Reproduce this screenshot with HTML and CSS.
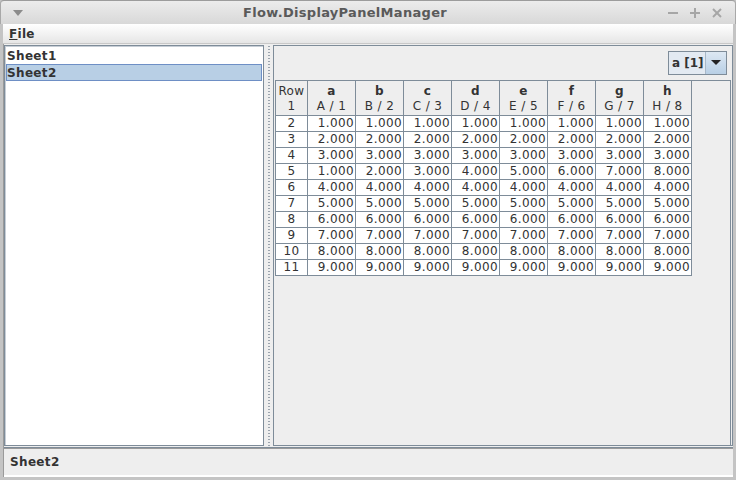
FILE: index.html
```html
<!DOCTYPE html>
<html>
<head>
<meta charset="utf-8">
<link rel="stylesheet" href="styles.css">
</head>
<body>
<div class="window">
  <div class="titlebar">
    <svg class="menu-arrow" width="10" height="6" viewBox="0 0 10 6"><polygon points="0,0 10,0 5,6" fill="#8c8c8c"/></svg>
    <div class="title">Flow.DisplayPanelManager</div>
    <div class="controls">
      <svg width="12" height="12" viewBox="0 0 12 12"><line x1="1" y1="6" x2="11" y2="6" stroke="#a6a6a6" stroke-width="2"/></svg>
      <svg width="12" height="12" viewBox="0 0 12 12"><line x1="1" y1="6" x2="11" y2="6" stroke="#a6a6a6" stroke-width="2"/><line x1="6" y1="1" x2="6" y2="11" stroke="#a6a6a6" stroke-width="2"/></svg>
      <svg width="12" height="12" viewBox="0 0 12 12"><line x1="2" y1="2" x2="10" y2="10" stroke="#a6a6a6" stroke-width="2"/><line x1="10" y1="2" x2="2" y2="10" stroke="#a6a6a6" stroke-width="2"/></svg>
    </div>
  </div>
  <div class="menubar"><span class="menu"><u>F</u>ile</span></div>
  <div class="main">
    <div class="list">
      <div class="item">Sheet1</div>
      <div class="item selected">Sheet2</div>
    </div>
    <div class="divider"><div class="dots"></div></div>
    <div class="right">
      <div class="toolbar">
        <div class="combo"><span class="combo-text">a [1]</span><span class="combo-btn"><svg width="10" height="6" viewBox="0 0 10 6"><polygon points="0,0 10,0 5,5" fill="#222"/></svg></span></div>
      </div>
      <div class="scroll">
        <table class="grid">
          <thead>
            <tr>
              <th class="rowcol">Row<br>1</th>
              <th><b>a</b><br>A / 1</th>
              <th><b>b</b><br>B / 2</th>
              <th><b>c</b><br>C / 3</th>
              <th><b>d</b><br>D / 4</th>
              <th><b>e</b><br>E / 5</th>
              <th><b>f</b><br>F / 6</th>
              <th><b>g</b><br>G / 7</th>
              <th><b>h</b><br>H / 8</th>
            </tr>
          </thead>
          <tbody>
            <tr><td class="rn">2</td><td>1.000</td><td>1.000</td><td>1.000</td><td>1.000</td><td>1.000</td><td>1.000</td><td>1.000</td><td>1.000</td></tr>
            <tr><td class="rn">3</td><td>2.000</td><td>2.000</td><td>2.000</td><td>2.000</td><td>2.000</td><td>2.000</td><td>2.000</td><td>2.000</td></tr>
            <tr><td class="rn">4</td><td>3.000</td><td>3.000</td><td>3.000</td><td>3.000</td><td>3.000</td><td>3.000</td><td>3.000</td><td>3.000</td></tr>
            <tr><td class="rn">5</td><td>1.000</td><td>2.000</td><td>3.000</td><td>4.000</td><td>5.000</td><td>6.000</td><td>7.000</td><td>8.000</td></tr>
            <tr><td class="rn">6</td><td>4.000</td><td>4.000</td><td>4.000</td><td>4.000</td><td>4.000</td><td>4.000</td><td>4.000</td><td>4.000</td></tr>
            <tr><td class="rn">7</td><td>5.000</td><td>5.000</td><td>5.000</td><td>5.000</td><td>5.000</td><td>5.000</td><td>5.000</td><td>5.000</td></tr>
            <tr><td class="rn">8</td><td>6.000</td><td>6.000</td><td>6.000</td><td>6.000</td><td>6.000</td><td>6.000</td><td>6.000</td><td>6.000</td></tr>
            <tr><td class="rn">9</td><td>7.000</td><td>7.000</td><td>7.000</td><td>7.000</td><td>7.000</td><td>7.000</td><td>7.000</td><td>7.000</td></tr>
            <tr><td class="rn">10</td><td>8.000</td><td>8.000</td><td>8.000</td><td>8.000</td><td>8.000</td><td>8.000</td><td>8.000</td><td>8.000</td></tr>
            <tr><td class="rn">11</td><td>9.000</td><td>9.000</td><td>9.000</td><td>9.000</td><td>9.000</td><td>9.000</td><td>9.000</td><td>9.000</td></tr>
          </tbody>
        </table>
      </div>
    </div>
  </div>
  <div class="status"><span class="status-text">Sheet2</span></div>
</div>
</body>
</html>
```
FILE: styles.css
```css
* { box-sizing: border-box; }
html, body { margin: 0; padding: 0; }
body {
  width: 736px;
  height: 480px;
  overflow: hidden;
  background: #c9c9c9;
  font-family: "DejaVu Sans", sans-serif;
  color: #333333;
}
.window {
  width: 736px;
  height: 480px;
  display: flex;
  flex-direction: column;
  background: #eeeeee;
  border-left: 3px solid #c4c4c4;
  border-right: 3px solid #c4c4c4;
  border-bottom: 3px solid #c4c4c4;
  box-shadow: inset 1px 0 0 #9a9a9a;
}
.titlebar {
  height: 24px;
  margin: 0 -3px;
  display: flex;
  align-items: center;
  background: linear-gradient(#ececec, #d8d8d8);
  border-top: 1px solid #9c9c9c;
  border-radius: 4px 4px 0 0;
  border-left: 1px solid #a8a8a8;
  border-right: 1px solid #a8a8a8;
}
.menu-arrow { margin-left: 12px; }
.title {
  flex: 1;
  text-align: center;
  font-weight: bold;
  font-size: 13px;
  letter-spacing: 0.3px;
  color: #5a5a5a;
  margin-left: -10px;
  margin-right: -10px;
}
.controls {
  display: flex;
  gap: 10px;
  margin-right: 12px;
}
.menubar {
  height: 20px;
  display: flex;
  align-items: center;
  background: linear-gradient(#ffffff, #e6e6e6);
  border-bottom: 1px solid #c8c8c8;
}
.menu {
  font-weight: bold;
  font-size: 12px;
  letter-spacing: 0.3px;
  color: #333;
  margin-left: 6px;
}
.main {
  flex: 1;
  display: flex;
  padding: 1px 0 1px 1px;
  min-height: 0;
}
.list {
  width: 260px;
  background: #ffffff;
  border: 1px solid #7e8c99;
  box-shadow: inset 1px 1px 0 #c7ced6;
  padding: 1px 1px;
}
.item {
  height: 17px;
  line-height: 16px;
  font-size: 12px;
  font-weight: bold;
  letter-spacing: 0.35px;
  color: #333;
  padding-left: 0;
  border: 1px solid transparent;
}
.item.selected {
  background: #b8cfe5;
  border-color: #6e8fc5;
}
.divider {
  width: 9px;
  display: flex;
  justify-content: center;
}
.dots {
  width: 2px;
  margin-left: 1px;
  background-image: radial-gradient(circle, #9aa3ad 0.7px, transparent 0.8px);
  background-size: 2px 3px;
}
.right {
  flex: 1;
  border: 1px solid #7e8c99;
  display: flex;
  flex-direction: column;
}
.toolbar {
  display: flex;
  justify-content: flex-end;
  padding: 5px 5px 5px 0;
}
.combo {
  display: flex;
  height: 24px;
  border: 1px solid #7e8c99;
}
.combo-text {
  width: 37px;
  background: #e3eaf2;
  border-right: 1px solid #a8b8c8;
  font-size: 12px;
  font-weight: bold;
  color: #333;
  line-height: 22px;
  padding-left: 3px;
}
.combo-btn {
  width: 20px;
  display: flex;
  align-items: center;
  justify-content: center;
  background: linear-gradient(#dde8f3, #b8cfe5);
}
.scroll {
  flex: 1;
  margin: 0 1px 0 1px;
  border-top: 1px solid #7e8c99;
  border-right: 1px solid #7e8c99;
}
.grid {
  border-collapse: collapse;
  font-size: 12px;
  letter-spacing: 0.4px;
  color: #333;
  table-layout: fixed;
}
.grid th {
  width: 48px;
  height: 34px;
  padding: 2px 0 0 0;
  font-weight: normal;
  line-height: 15px;
  text-align: center;
  background: #eeeeee;
  border: 1px solid #7e8c99;
  border-top: none;
  vertical-align: middle;
}
.grid th b { font-weight: bold; }
.grid th.rowcol { width: 32px; }
.grid td {
  height: 16px;
  padding: 0 1px 0 0;
  line-height: 15px;
  text-align: right;
  background: #ffffff;
  border: 1px solid #7e8c99;
  white-space: nowrap;
}
.grid td.rn {
  text-align: center;
  padding: 0;
}
.status {
  height: 30px;
  margin: 0 0 0 1px;
  border-top: 1px solid #7e8c99;
  border-bottom: 2px solid #ffffff;
  display: flex;
  align-items: center;
  box-shadow: inset 0 1px 0 #9a9a9a;
}
.status-text {
  font-size: 12px;
  font-weight: bold;
  letter-spacing: 0.35px;
  color: #333;
  margin-left: 6px;
}
```
